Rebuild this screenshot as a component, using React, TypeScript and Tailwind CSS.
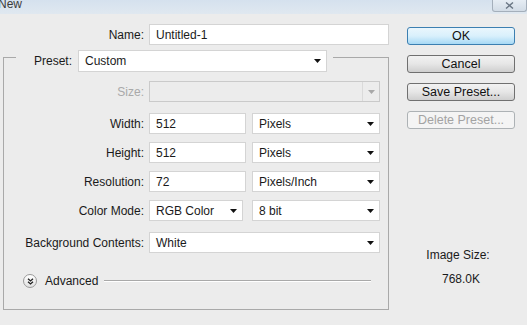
import React from 'react';

const font = { fontFamily: '"Liberation Sans", Arial, sans-serif' };

const Arrow: React.FC<{ disabled?: boolean }> = ({ disabled }) => (
  <svg width="7" height="4" viewBox="0 0 7 4" className="shrink-0">
    <path d="M0 0H7L3.5 4Z" fill={disabled ? '#a8a8a8' : '#111'} />
  </svg>
);

type FieldProps = { value?: string; className?: string };

const TextInput: React.FC<FieldProps> = ({ value, className }) => (
  <div
    className={`h-[21px] bg-white border border-[#d4d4d4] flex items-center pl-[6px] text-[#1a1a1a] ${className ?? ''}`}
  >
    {value}
  </div>
);

const Select: React.FC<FieldProps> = ({ value, className }) => (
  <div
    className={`h-[21px] bg-white border border-[#d4d4d4] flex items-center justify-between pl-[6px] pr-[5px] text-[#1a1a1a] ${className ?? ''}`}
  >
    <span>{value}</span>
    <Arrow />
  </div>
);

const Row: React.FC<{ label: string; children: React.ReactNode; className?: string; muted?: boolean }> = ({
  label,
  children,
  className,
  muted,
}) => (
  <div className={`flex items-center gap-[5px] ${className ?? ''}`}>
    <span className={`w-[140px] text-right ${muted ? 'text-[#a9a9a9]' : 'text-[#1a1a1a]'}`}>{label}</span>
    {children}
  </div>
);

const Button: React.FC<{ label: string; primary?: boolean; disabled?: boolean; className?: string }> = ({
  label,
  primary,
  disabled,
  className,
}) => {
  const look = primary
    ? 'border-[#3c7fb1] bg-gradient-to-b from-[#eaf6fd] via-[#d9f0fc] to-[#a7d9f5] text-[#111]'
    : disabled
      ? 'border-[#adb2b5] bg-[#f4f4f4] text-[#a3a3a3]'
      : 'border-[#707070] bg-gradient-to-b from-[#f2f2f2] via-[#e6e6e6] to-[#cfcfcf] text-[#111]';
  return (
    <div
      className={`w-[108px] h-[18px] rounded-[3px] border flex items-center justify-center text-[12.5px] ${look} ${className ?? ''}`}
    >
      {label}
    </div>
  );
};

export default function App() {
  return (
    <div style={font} className="w-[527px] h-[325px] bg-[#ececec] text-[12px] leading-[14px] flex flex-col overflow-hidden">
      {/* title bar */}
      <div className="h-[14px] bg-gradient-to-b from-[#d5e1ee] to-[#e0e8f0] flex items-start justify-between">
        <span className="-ml-[2px] -mt-[2px] text-[12px] leading-[13px] text-[#3c3c3c]">New</span>
        <div className="w-[35px] h-[12px] border border-t-0 border-[#a4afbb] rounded-b-[3px] bg-gradient-to-b from-[#e6edf4] to-[#d2dce6] flex items-center justify-center">
          <svg width="9" height="7" viewBox="0 0 9 7">
            <path d="M1 0.5L8 6.5M8 0.5L1 6.5" stroke="#6b7785" strokeWidth="1.4" />
          </svg>
        </div>
      </div>

      <div className="flex flex-1">
        {/* left column */}
        <div className="w-[389px] flex flex-col">
          <div className="flex items-center gap-[5px] mt-[10px]">
            <span className="w-[144px] text-right text-[#1a1a1a]">Name:</span>
            <TextInput value="Untitled-1" className="w-[240px]" />
          </div>

          {/* preset group */}
          <div className="flex mt-[5px] ml-[3px]">
            <div className="w-[13px] mt-[7px] border-t border-l border-[#a9a9a9]" />
            <div className="flex items-center pl-[18px] pr-[6px]">
              <span className="w-[38px] text-[#1a1a1a]">Preset:</span>
              <Select value="Custom" className="ml-[6px] w-[249px] h-[22px]" />
            </div>
            <div className="flex-1 mt-[7px] border-t border-r border-[#a9a9a9]" />
          </div>
          <div className="ml-[3px] h-[238px] border-l border-r border-b border-[#a9a9a9] flex flex-col pt-[9px]">
            <Row label="Size:" muted>
              <div className="w-[231px] h-[21px] border border-[#cacaca] bg-[#ececec] flex justify-end">
                <div className="w-[17px] border-l border-[#dadada] flex items-center justify-center">
                  <Arrow disabled />
                </div>
              </div>
            </Row>
            <Row label="Width:" className="mt-[11px]">
              <TextInput value="512" className="w-[97px]" />
              <Select value="Pixels" className="ml-[1px] w-[128px]" />
            </Row>
            <Row label="Height:" className="mt-[8px]">
              <TextInput value="512" className="w-[97px]" />
              <Select value="Pixels" className="ml-[1px] w-[128px]" />
            </Row>
            <Row label="Resolution:" className="mt-[8px]">
              <TextInput value="72" className="w-[97px]" />
              <Select value="Pixels/Inch" className="ml-[1px] w-[128px]" />
            </Row>
            <Row label="Color Mode:" className="mt-[8px]">
              <Select value="RGB Color" className="w-[94px]" />
              <Select value="8 bit" className="ml-[4px] w-[128px]" />
            </Row>
            <Row label="Background Contents:" className="mt-[11px]">
              <Select value="White" className="w-[231px]" />
            </Row>
            <div className="flex items-center mt-[21px] ml-[19px] mr-[17px]">
              <div className="w-[14px] h-[14px] rounded-full border border-[#9a9a9a] bg-gradient-to-b from-white to-[#e2e2e2] flex items-center justify-center">
                <svg width="7" height="7" viewBox="0 0 7 7">
                  <path d="M1 0.8L3.5 3L6 0.8M1 3.8L3.5 6L6 3.8" stroke="#222" strokeWidth="1.3" fill="none" />
                </svg>
              </div>
              <span className="ml-[8px] text-[#1a1a1a]">Advanced</span>
              <div className="flex-1 ml-[6px] h-[2px] border-t border-[#a9a9a9] border-b border-b-white" />
            </div>
          </div>
        </div>

        {/* right column */}
        <div className="flex-1 flex flex-col pl-[18px]">
          <Button label="OK" primary className="mt-[13px] h-[17px]" />
          <Button label="Cancel" className="mt-[10px]" />
          <Button label="Save Preset..." className="mt-[10px]" />
          <Button label="Delete Preset..." disabled className="mt-[10px]" />
          <div className="w-[108px] flex flex-col items-center mt-[119px] text-[#1a1a1a]">
            <span className="-ml-[6px]">Image Size:</span>
            <span className="mt-[10px]">768.0K</span>
          </div>
        </div>
      </div>
    </div>
  );
}
